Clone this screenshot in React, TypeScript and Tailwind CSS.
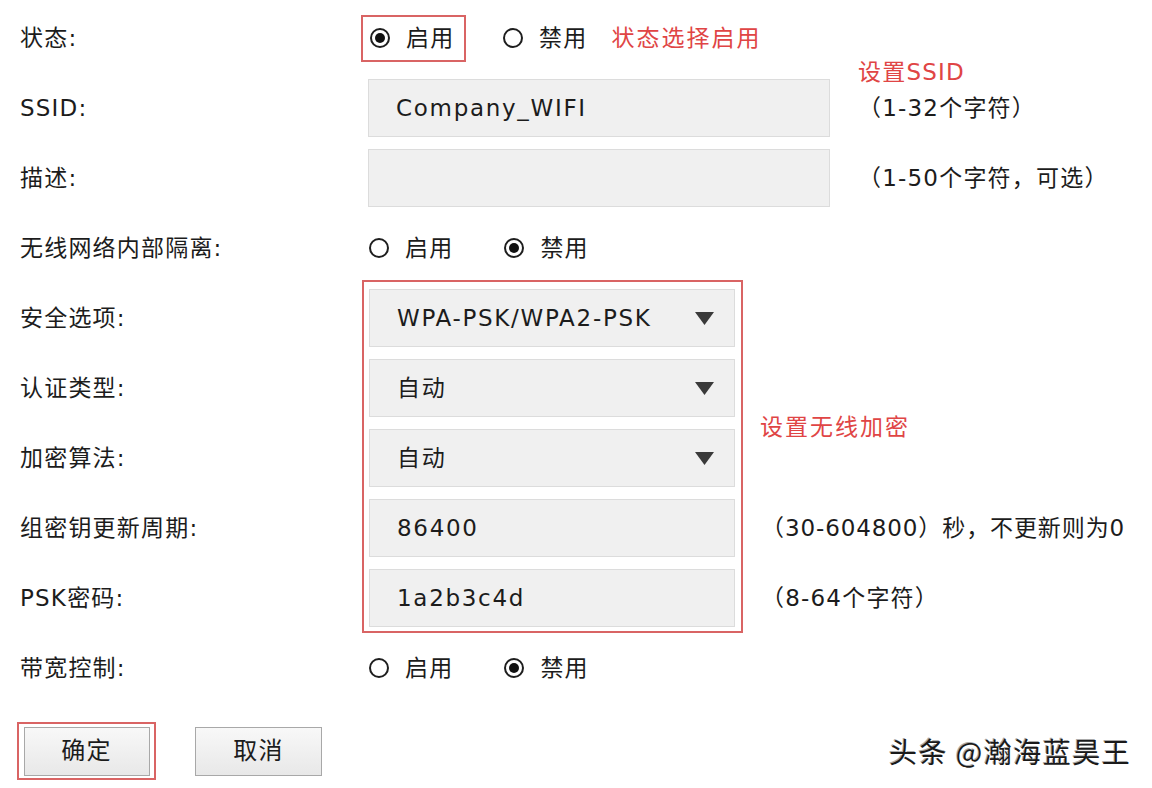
import React from 'react';

const font = { fontFamily: '"DejaVu Sans", "Noto Sans CJK SC", sans-serif' };

function Radio({ checked, label }: { checked?: boolean; label: string }) {
  return (
    <div className="flex items-center">
      <span className="w-[20px] h-[20px] rounded-full border-2 border-[#1e1e1e] flex items-center justify-center bg-white">
        {checked && <span className="w-[10px] h-[10px] rounded-full bg-[#111]" />}
      </span>
      <span className="ml-[16px]">{label}</span>
    </div>
  );
}

function Caret() {
  return (
    <svg width="19" height="13" viewBox="0 0 19 13" className="shrink-0">
      <polygon points="0,0 19,0 9.5,13" fill="#3a3a3a" />
    </svg>
  );
}

function Field({ value, select, width }: { value?: string; select?: boolean; width: string }) {
  return (
    <div className={`${width} h-[58px] bg-[#f0f0f0] border border-[#dcdcdc] flex items-center justify-between pl-[27px] pr-[20px]`}>
      <span className="tracking-[1.7px]">{value}</span>
      {select && <Caret />}
    </div>
  );
}

function Row({ label, children, labelW = 'w-[348px]' }: { label: string; children?: React.ReactNode; labelW?: string }) {
  return (
    <div className="h-[70px] flex items-center">
      <div className={`${labelW} shrink-0 whitespace-nowrap`}>{label}</div>
      {children}
    </div>
  );
}

export default function App() {
  return (
    <div
      className="w-[1152px] h-[788px] bg-white relative overflow-hidden pl-[20px] pt-[3px] text-[23px] tracking-[1.2px] text-[#1c1c1c]"
      style={font}
    >
      {/* 状态 */}
      <Row label="状态:" labelW="w-[341px]">
        <div className="w-[105px] h-[47px] border-2 border-[#d96464] flex items-center pl-[7px]">
          <Radio checked label="启用" />
        </div>
        <div className="ml-[37px]">
          <Radio label="禁用" />
        </div>
        <span className="ml-[24px] tracking-[2px] text-[#e04545]">状态选择启用</span>
      </Row>

      {/* SSID */}
      <Row label="SSID:">
        <Field value="Company_WIFI" width="w-[462px]" />
        <div className="ml-[28px] relative whitespace-nowrap">
          <span className="absolute left-0 top-[-36px] text-[#e04545]">设置SSID</span>
          （1-32个字符）
        </div>
      </Row>

      <Row label="描述:">
        <Field width="w-[462px]" />
        <div className="ml-[28px] whitespace-nowrap">（1-50个字符，可选）</div>
      </Row>

      <Row label="无线网络内部隔离:" labelW="w-[349px]">
        <Radio label="启用" />
        <div className="ml-[51px]">
          <Radio checked label="禁用" />
        </div>
      </Row>

      {/* 无线加密 */}
      <div className="relative">
        <div className="absolute left-[342px] top-[-3px] w-[381px] h-[353px] border-2 border-[#d96464]" />
        <span className="absolute left-[740px] top-[127px] text-[#e04545] tracking-[2px] whitespace-nowrap">设置无线加密</span>
        <Row label="安全选项:" labelW="w-[349px]">
          <Field value="WPA-PSK/WPA2-PSK" select width="w-[366px]" />
        </Row>
        <Row label="认证类型:" labelW="w-[349px]">
          <Field value="自动" select width="w-[366px]" />
        </Row>
        <Row label="加密算法:" labelW="w-[349px]">
          <Field value="自动" select width="w-[366px]" />
        </Row>
        <Row label="组密钥更新周期:" labelW="w-[349px]">
          <Field value="86400" width="w-[366px]" />
          <div className="ml-[26px] whitespace-nowrap tracking-[0.9px]">（30-604800）秒，不更新则为0</div>
        </Row>
        <Row label="PSK密码:" labelW="w-[349px]">
          <Field value="1a2b3c4d" width="w-[366px]" />
          <div className="ml-[26px] whitespace-nowrap">（8-64个字符）</div>
        </Row>
      </div>

      <Row label="带宽控制:" labelW="w-[349px]">
        <Radio label="启用" />
        <div className="ml-[51px]">
          <Radio checked label="禁用" />
        </div>
      </Row>

      {/* buttons */}
      <div className="flex items-center mt-[19px] ml-[-3px]">
        <div className="w-[139px] h-[58px] border-2 border-[#d96464] flex items-center justify-center">
          <button className="w-[126px] h-[49px] bg-gradient-to-b from-[#f8f8f8] to-[#e8e8e8] border border-[#a8a8a8] text-[24px] text-[#1c1c1c]">确定</button>
        </div>
        <button className="ml-[39px] w-[127px] h-[49px] bg-gradient-to-b from-[#f8f8f8] to-[#e8e8e8] border border-[#a8a8a8] text-[24px] text-[#1c1c1c]">取消</button>
      </div>

      <div
        className="absolute left-[889px] top-[730px] text-[28px] tracking-[1.5px] text-[#1a1a1a] whitespace-nowrap [text-shadow:1px_1px_0_#fff,-1px_-1px_0_#aaa]"
        style={{ fontFamily: '"Noto Sans CJK SC", sans-serif' }}
      >
        头条 @瀚海蓝昊王
      </div>
    </div>
  );
}
